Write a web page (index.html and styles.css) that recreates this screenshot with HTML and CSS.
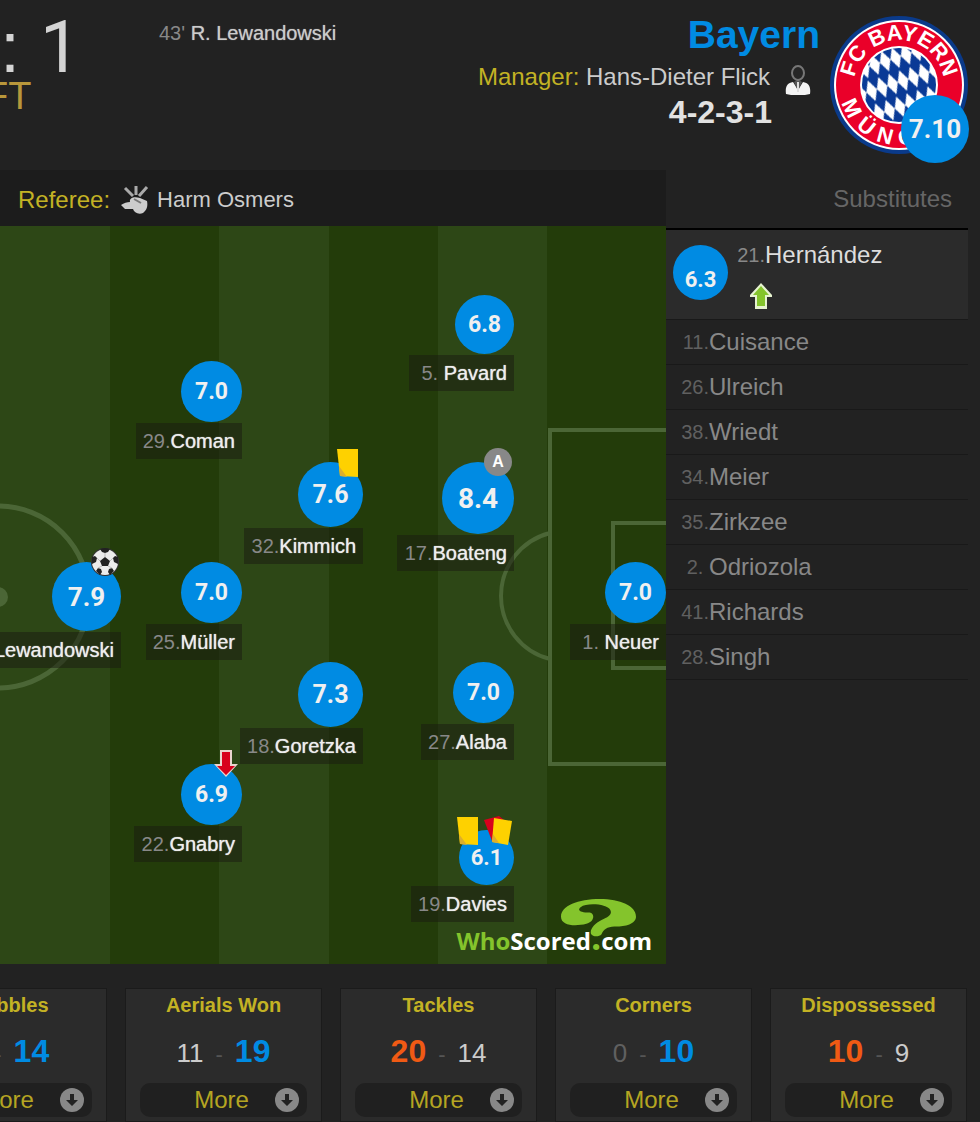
FILE: index.html
```html
<!doctype html>
<html lang="en">
<head>
    <meta charset="utf-8">
    <title>Match Centre</title>
    <link rel="stylesheet" href="styles.css">
</head>
<body>
<!-- shared icons -->
<svg class="icon-defs" aria-hidden="true">
    <symbol id="icon-yellow" viewBox="0 0 24 30">
        <path d="M0 1H21V29L3 28Z" fill="#fed100"/>
        <path d="M2 18L10 29L3 28Z" fill="#dcae2c"/>
    </symbol>
    <symbol id="icon-second-yellow" viewBox="0 0 28 30">
        <path d="M0 4L15 0L20 4L18 20L8 25Z" fill="#d8001c"/>
        <path d="M10 2L28 5L24 29L8 26Z" fill="#fed100"/>
        <path d="M9 18L15 27L8 26Z" fill="#dcae2c"/>
    </symbol>
    <symbol id="icon-off" viewBox="0 0 24 28">
        <path d="M6 0H18V14H24L12 27L0 14H6Z" fill="#e9d5ce"/>
        <path d="M8 2H16V16H21L12 25L3 16H8Z" fill="#d8001c"/>
    </symbol>
    <symbol id="icon-on" viewBox="0 0 24 28">
        <path d="M12 1L23 13V15H18V27H6V15H1V13Z" fill="#e6f3cf"/>
        <path d="M12 4L20 13H16V24H8V13H4Z" fill="#84c42c"/>
    </symbol>
    <symbol id="icon-goal" viewBox="0 0 28 28">
        <circle cx="14" cy="14" r="14" fill="#333"/>
        <circle cx="14" cy="14" r="13" fill="#ececec"/>
        <path d="M14 9L19 13L17 18H11L9 13Z" fill="#222"/>
        <path d="M9 1Q14 -1 19 1L17 4L14 5L11 4ZM1 9L4 8L6 10L5 14L1 16ZM27 9L24 8L22 10L23 14L27 16ZM5 23L7 20L10 21L11 24L9 27ZM23 23L21 20L18 21L17 24L19 27Z" fill="#222"/>
        <path d="M14 5V9M6 10L9 13M22 10L19 13M7 20L11 18M21 20L17 18" stroke="#bbb" fill="none"/>
    </symbol>
    <symbol id="icon-more" viewBox="0 0 24 24">
        <circle cx="12" cy="12" r="12" fill="#888"/>
        <path d="M10 6H14V12H18L12 18L6 12H10Z" fill="#222"/>
    </symbol>
</svg>

<header class="match-header">
    <div class="result">
        <div class="score">: <span>1</span></div>
        <div class="status">FT</div>
    </div>
    <div class="goal"><span class="minute">43'</span> R. Lewandowski</div>
    <div class="team">
        <h1 class="team-name">Bayern</h1>
        <div class="manager">
            <span class="caption">Manager:</span>&nbsp;<span>Hans-Dieter Flick</span>
            <svg class="manager-icon" viewBox="0 0 26 30">
                <path d="M1 29C0 22 2 18 8 17L13 25L18 17C24 18 26 22 25 29Q13 32 1 29Z" fill="#f4f4f4"/>
                <path d="M9 17L13 26L17 17L14 15H12Z" fill="#555"/>
                <path d="M13 17V27" stroke="#ddd" stroke-width="2"/>
                <ellipse cx="13" cy="8" rx="6" ry="7" fill="#262626" stroke="#777" stroke-width="2"/>
            </svg>
        </div>
        <div class="formation">4-2-3-1</div>
    </div>
    <div class="crest">
        <svg viewBox="0 0 138 138" role="img" aria-label="FC Bayern München">
            <defs>
                <pattern id="lozenge" width="11" height="24" patternUnits="userSpaceOnUse" patternTransform="rotate(-18)">
                    <path d="M0 0H11V24H0Z" fill="#0a3a96"/>
                    <path d="M5 1L11 12L6 23L0 12Z" fill="#fff"/>
                </pattern>
                <path id="arc-top" d="M24 69A45 45 0 0 1 114 69"/>
                <path id="arc-bottom" d="M9 69A60 60 0 0 0 129 69"/>
            </defs>
            <circle cx="69" cy="69" r="69" fill="#0a3a8a"/>
            <circle cx="69" cy="69" r="65" fill="#fff"/>
            <circle cx="69" cy="69" r="63" fill="#ea0029"/>
            <circle cx="69" cy="69" r="39" fill="#fff"/>
            <circle cx="69" cy="69" r="37" fill="url(#lozenge)"/>
            <text class="crest-text" text-anchor="middle"><textPath href="#arc-top" startOffset="50%">FC BAYERN</textPath></text>
            <text class="crest-text" x="18 46 70 94 114 134 152"><textPath href="#arc-bottom">MÜNCHEN</textPath></text>
        </svg>
        <span class="rating team-rating">7.10</span>
    </div>
</header>

<main class="match">
    <section class="field">
        <div class="referee">
            <span class="caption">Referee:</span>
            <svg class="referee-icon" viewBox="0 0 28 30">
                <path d="M4 3L12 11M15 1V10M26 2L18 11" stroke="#aaa" stroke-width="3"/>
                <path d="M0 20C3 18 6 17 9 17C8 13 13 11 19 13L26 16C27 21 26 25 22 28C17 30 13 27 12 24L4 24Z" fill="#ccc"/>
                <path d="M13 14L20 18" stroke="#777" stroke-width="2"/>
            </svg>
            <span class="referee-name">Harm Osmers</span>
        </div>
        <div class="pitch">
            <svg class="pitch-lines" viewBox="0 0 666 738" preserveAspectRatio="xMaxYMid slice">
                <path d="M0 0H666V738H0Z" fill="#233c0a"/>
                <path d="M0 0H110V738H0ZM219 0H329V738H219ZM438 0H547V738H438Z" fill="#2d4716"/>
                <g fill="none" stroke="#4b6636" stroke-width="4">
                    <path d="M670 204H550V538H670M670 297H613V442H670"/>
                    <path d="M550 307A65 65 0 0 0 550 433"/>
                    <circle cx="-2" cy="371" r="91" stroke-width="5"/>
                </g>
                <circle cx="-2" cy="371" r="10" fill="#4b6636"/>
            </svg>

            <div class="player lewandowski">
                <span class="rating size-5">7.9</span>
                <span class="incidents"><svg width="28" height="28"><use href="#icon-goal"/></svg></span>
                <div class="label"><span class="number">9.&nbsp;</span><a href="#">Lewandowski</a></div>
            </div>
            <div class="player coman">
                <span class="rating size-3">7.0</span>
                <div class="label"><span class="number">29.</span><a href="#">Coman</a></div>
            </div>
            <div class="player muller">
                <span class="rating size-3">7.0</span>
                <div class="label"><span class="number">25.</span><a href="#">Müller</a></div>
            </div>
            <div class="player gnabry">
                <span class="rating size-3">6.9</span>
                <span class="incidents"><svg width="28" height="28"><use href="#icon-off"/></svg></span>
                <div class="label"><span class="number">22.</span><a href="#">Gnabry</a></div>
            </div>
            <div class="player kimmich">
                <span class="rating size-4">7.6</span>
                <span class="incidents"><svg width="24" height="30"><use href="#icon-yellow"/></svg></span>
                <div class="label"><span class="number">32.</span><a href="#">Kimmich</a></div>
            </div>
            <div class="player goretzka">
                <span class="rating size-4">7.3</span>
                <div class="label"><span class="number">18.</span><a href="#">Goretzka</a></div>
            </div>
            <div class="player pavard">
                <span class="rating size-2">6.8</span>
                <div class="label"><span class="number">5.&nbsp;</span><a href="#">Pavard</a></div>
            </div>
            <div class="player boateng">
                <span class="rating size-6">8.4</span>
                <span class="incidents"><span class="assist">A</span></span>
                <div class="label"><span class="number">17.</span><a href="#">Boateng</a></div>
            </div>
            <div class="player alaba">
                <span class="rating size-3">7.0</span>
                <div class="label"><span class="number">27.</span><a href="#">Alaba</a></div>
            </div>
            <div class="player davies">
                <span class="rating size-1">6.1</span>
                <span class="incidents">
                    <svg width="24" height="30"><use href="#icon-yellow"/></svg>
                    <svg width="28" height="30"><use href="#icon-second-yellow"/></svg>
                </span>
                <div class="label"><span class="number">19.</span><a href="#">Davies</a></div>
            </div>
            <div class="player neuer">
                <span class="rating size-3">7.0</span>
                <div class="label"><span class="number">1.&nbsp;</span><a href="#">Neuer</a></div>
            </div>

            <div class="brand">
                <svg class="brand-mark" viewBox="0 0 222 112">
                    <path d="M0 52C0 20 50 0 115 0C175 0 222 20 222 52C222 75 185 82 158 81C136 82 126 90 120 104C112 113 94 112 89 103C84 90 100 72 120 62C142 52 152 45 146 32C136 14 76 10 58 24C46 34 60 40 85 40C102 44 98 68 75 73C40 82 0 78 0 52Z" fill="#84c42c"/>
                </svg>
                <div class="brand-name"><span>Who</span>Scored<span class="dot">.</span>com</div>
            </div>
        </div>
    </section>

    <aside class="bench">
        <h2 class="bench-title">Substitutes</h2>
        <ul class="subs">
            <li class="sub used">
                <span class="rating size-1">6.3</span>
                <div>
                    <div class="sub-name"><span class="number">21.</span><a href="#">Hernández</a></div>
                    <svg class="sub-on" width="24" height="28"><use href="#icon-on"/></svg>
                </div>
            </li>
            <li class="sub"><span class="number">11.</span><a href="#">Cuisance</a></li>
            <li class="sub"><span class="number">26.</span><a href="#">Ulreich</a></li>
            <li class="sub"><span class="number">38.</span><a href="#">Wriedt</a></li>
            <li class="sub"><span class="number">34.</span><a href="#">Meier</a></li>
            <li class="sub"><span class="number">35.</span><a href="#">Zirkzee</a></li>
            <li class="sub"><span class="number">2.&nbsp;</span><a href="#">Odriozola</a></li>
            <li class="sub"><span class="number">41.</span><a href="#">Richards</a></li>
            <li class="sub"><span class="number">28.</span><a href="#">Singh</a></li>
        </ul>
    </aside>
</main>

<section class="stats">
    <div class="stat">
        <h3>Dribbles</h3>
        <div class="values"><span>9</span><i>-</i><b class="away">14</b></div>
        <button class="more">More<svg width="24" height="24"><use href="#icon-more"/></svg></button>
    </div>
    <div class="stat">
        <h3>Aerials Won</h3>
        <div class="values"><span>11</span><i>-</i><b class="away">19</b></div>
        <button class="more">More<svg width="24" height="24"><use href="#icon-more"/></svg></button>
    </div>
    <div class="stat">
        <h3>Tackles</h3>
        <div class="values"><b class="home">20</b><i>-</i><span>14</span></div>
        <button class="more">More<svg width="24" height="24"><use href="#icon-more"/></svg></button>
    </div>
    <div class="stat">
        <h3>Corners</h3>
        <div class="values"><span class="zero">0</span><i>-</i><b class="away">10</b></div>
        <button class="more">More<svg width="24" height="24"><use href="#icon-more"/></svg></button>
    </div>
    <div class="stat">
        <h3>Dispossessed</h3>
        <div class="values"><b class="home">10</b><i>-</i><span>9</span></div>
        <button class="more">More<svg width="24" height="24"><use href="#icon-more"/></svg></button>
    </div>
</section>
</body>
</html>
```

FILE: styles.css
```css
* { margin: 0; padding: 0; box-sizing: border-box; }
body { background-color: #222; color: #ccc; font-family: "Liberation Sans", Arial, sans-serif; font-size: 24px; overflow-x: hidden; }
a { color: inherit; text-decoration: none; }
svg { display: block; }
.icon-defs { position: absolute; width: 0; height: 0; }
.caption { color: #c3b224; }

/* Header */
.match-header { display: flex; height: 170px; padding-right: 12px; }
.result { width: 159px; padding-top: 17px; }
.score { height: 60px; font-size: 72px; line-height: 60px; color: #d4d4d4; }
.score span { font-family: Roboto, sans-serif; }
.status { font-size: 38px; line-height: 38px; color: #b8973b; margin-left: -15px; }
.goal { font-size: 20px; line-height: 24px; margin-top: 21px; text-shadow: 0 0 1px #999; }
.minute { color: #888; text-shadow: none; }
.team { flex: 1; display: flex; flex-direction: column; align-items: flex-end; padding-top: 15px; margin-right: 10px; }
.team-name { font-size: 39px; line-height: 40px; color: #008be3; margin-bottom: 4px; }
.manager { display: flex; align-items: center; line-height: 32px; }
.manager-icon { width: 26px; height: 30px; margin: 6px 9px 0 15px; }
.formation { font-size: 32px; line-height: 34px; font-weight: bold; color: #e2e2e2; padding-right: 48px; }
.crest { position: relative; width: 138px; height: 138px; margin-top: 16px; }
.crest-text { font-size: 22px; font-weight: bold; fill: #fff; }
.team-rating { position: absolute; right: -1px; bottom: -9px; width: 68px; height: 68px; font-size: 26px; }

/* Rating bubbles, the better the bigger */
.rating { display: flex; align-items: center; justify-content: center; border-radius: 50%; background-color: #008be3; color: #f0f0f0; font-family: Roboto, sans-serif; font-weight: bold; }
.size-1 { width: 55px; height: 55px; font-size: 22px; }
.size-2 { width: 59px; height: 59px; font-size: 23px; }
.size-3 { width: 61px; height: 61px; font-size: 23px; }
.size-4 { width: 65px; height: 65px; font-size: 25px; }
.size-5 { width: 69px; height: 69px; font-size: 26px; }
.size-6 { width: 72px; height: 72px; font-size: 28px; }

.match { display: grid; grid-template-columns: 1fr 302px; padding-right: 12px; }
.referee { display: flex; align-items: center; height: 56px; padding: 3px 18px 0; background-color: #1c1c1c; }
.referee-icon { width: 28px; height: 30px; margin: 0 8px 0 11px; }
.referee-name { font-size: 22px; }

/* Pitch */
.pitch { position: relative; height: 738px; overflow: hidden; }
.pitch-lines { width: 100%; height: 100%; }
.player { position: absolute; display: flex; flex-direction: column; align-items: flex-end; gap: 1px; }
.label { display: flex; align-items: center; height: 36px; padding: 0 7px; background-color: rgba(26, 26, 16, 0.5); font-size: 20px; color: #eee; white-space: nowrap; }
.label a { text-shadow: 0 0 1px #ddd; }
.number { width: 28px; text-align: right; font-size: 20px; color: #888; }
.incidents { position: absolute; top: -14px; right: 2px; display: flex; gap: 3px; }
.assist { width: 28px; height: 28px; border-radius: 50%; background-color: #888; color: #fff; font-size: 16px; line-height: 28px; font-weight: bold; text-align: center; }

.lewandowski { right: 545px; top: 336px; }
.coman { right: 424px; top: 135px; }
.muller { right: 424px; top: 336px; }
.gnabry { right: 424px; top: 538px; }
.kimmich { right: 303px; top: 236px; }
.goretzka { right: 303px; top: 436px; }
.pavard { right: 152px; top: 69px; }
.boateng { right: 152px; top: 236px; }
.alaba { right: 152px; top: 436px; }
.davies { right: 152px; top: 604px; }
.neuer { right: 0; top: 336px; }

.brand { position: absolute; right: 14px; bottom: 7px; }
.brand-mark { width: 75px; height: 38px; margin: 0 16px -12px auto; }
.brand-name { font-family: "Open Sans", sans-serif; font-size: 24px; line-height: 32px; font-weight: bold; color: #fff; }
.brand-name span { color: #84c42c; }
.brand-name .dot { font-size: 36px; line-height: 24px; }

/* Substitutes */
.bench-title { height: 58px; line-height: 58px; padding-right: 16px; text-align: right; font-size: 24px; font-weight: normal; color: #666; }
.subs { list-style: none; border-top: 2px solid #000; }
.sub { display: flex; align-items: center; height: 45px; padding-left: 15px; border-bottom: 1px solid #191919; color: #888; }
.sub .number { color: #606060; }
.used { height: 90px; align-items: flex-start; gap: 9px; padding: 10px 7px 0; background-color: #2b2b2b; color: #ddd; }
.used .rating { margin-top: 5px; padding-top: 14px; }
.used .number { color: #888; }
.sub-name { display: flex; align-items: center; line-height: 30px; }
.sub-on { margin: 12px 0 0 12px; }

/* Stat cards */
.stats { display: grid; grid-template-columns: repeat(5, 1fr); gap: 18px; margin: 24px 13px 0 -90px; }
.stat { padding: 4px 14px; border: 1px solid #1b1b1b; background-color: #2b2b2b; text-align: center; }
.stat h3 { font-size: 20px; line-height: 24px; color: #c3b224; }
.values { display: flex; justify-content: center; align-items: baseline; gap: 12px; height: 40px; margin: 14px 0 12px; font-size: 26px; line-height: 40px; color: #ccc; }
.values i { font-size: 22px; font-style: normal; color: #555; }
.values b { font-size: 32px; }
.values .away { color: #008be3; }
.values .home { color: #f05a14; }
.values .zero { color: #606060; }
.more { position: relative; display: block; width: 100%; height: 34px; padding-right: 4px; border: 0; border-radius: 10px; background-color: #202020; color: #b5a522; font-family: inherit; font-size: 24px; line-height: 34px; cursor: pointer; }
.more svg { position: absolute; top: 5px; right: 8px; }
```
